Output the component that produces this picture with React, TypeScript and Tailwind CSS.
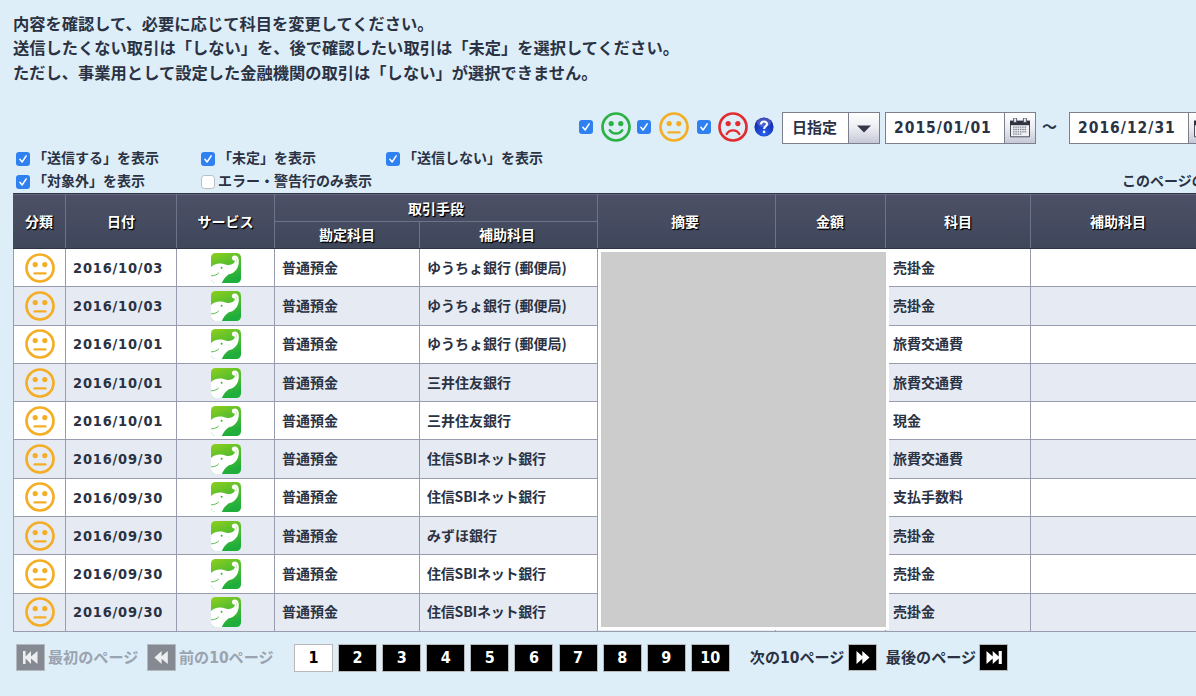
import React from "react";

type Mood = "happy" | "neutral" | "sad";

const moodColor: Record<Mood, string> = {
  happy: "#2cb242",
  neutral: "#f3ae26",
  sad: "#e02c30",
};

function Face({ mood }: { mood: Mood }) {
  const c = moodColor[mood];
  return (
    <svg width="30" height="30" viewBox="0 0 30 30" fill="none" className="block shrink-0">
      <circle cx="15" cy="15" r="13.5" stroke={c} strokeWidth="2.7" />
      <circle cx="10.2" cy="11.6" r="2.6" fill={c} />
      <circle cx="19.8" cy="11.6" r="2.6" fill={c} />
      {mood === "happy" && (
        <path d="M8.7 18.2C11.3 22.6 18.7 22.6 21.3 18.2" stroke={c} strokeWidth="2.4" strokeLinecap="round" />
      )}
      {mood === "neutral" && <path d="M9.6 20.4H20.4" stroke={c} strokeWidth="2.4" strokeLinecap="round" />}
      {mood === "sad" && (
        <path d="M8.7 22C11.3 17.2 18.7 17.2 21.3 22" stroke={c} strokeWidth="2.4" strokeLinecap="round" />
      )}
    </svg>
  );
}

function Check({ on = true }: { on?: boolean }) {
  return (
    <svg width="14" height="14" viewBox="0 0 14 14" fill="none" className="block shrink-0">
      {on ? (
        <>
          <rect width="14" height="14" rx="3" fill="#2f80f0" />
          <path d="M3.9 7.3L6.1 10L10.2 3.8" stroke="#fff" strokeWidth="1.5" strokeLinecap="round" strokeLinejoin="round" />
        </>
      ) : (
        <rect x=".5" y=".5" width="13" height="13" rx="2.8" fill="#fff" stroke="#b9bec3" />
      )}
    </svg>
  );
}

function Elephant() {
  return (
    <svg width="30" height="30" viewBox="0 0 30 30" className="block">
      <defs>
        <linearGradient id="leaf" x1="0" y1="0" x2="0.4" y2="1">
          <stop offset="0" stopColor="#8fcf1d" />
          <stop offset="1" stopColor="#1fae3c" />
        </linearGradient>
        <clipPath id="tile">
          <rect width="30" height="30" rx="4.5" />
        </clipPath>
      </defs>
      <g clipPath="url(#tile)">
        <rect width="30" height="30" fill="url(#leaf)" />
        <path
          d="M0 14C2.5 11.6 6 10.2 10 10.6C13 10.9 14.6 12.2 17.6 12C21.6 11.7 24 10 23.8 7.6C22.4 7.6 20.8 6.9 20.8 5C20.8 3.3 22.4 2.2 24.2 2.5C27 2.9 28 5.5 27.8 9C27.4 15.8 23.5 20.4 17.8 21.2C14.8 23.6 12.2 26.2 10.8 30H0Z"
          fill="#fff"
        />
        <path d="M24.6 4.9C25.6 6 25.8 7.6 25.4 9.6" stroke="#b4df85" strokeWidth=".6" fill="none" />
        <circle cx="10.6" cy="14.8" r="1" fill="#3fae35" />
        <path d="M0.5 22.8C3.6 22.8 6 21.7 7.6 20" stroke="#45b437" strokeWidth=".9" fill="none" strokeLinecap="round" />
      </g>
    </svg>
  );
}

function Calendar() {
  return (
    <svg width="20" height="20" viewBox="0 0 20 20" className="block">
      <path d="M.5 3.5h19v15.3H.5z" fill="#f1f2f5" stroke="#4a4f5c" />
      <path d="M0 2.6h20v4.6H0z" fill="#2f3340" />
      <path d="M3.6 0h3v4.4h-3zM13.4 0h3v4.4h-3z" fill="#e8eaf0" stroke="#3c4150" strokeWidth=".8" />
      <path d="M3 9.2h14M3 11.5h14M3 13.8h14M3 16.1h9" stroke="#7d8290" strokeWidth="1.3" strokeDasharray="1.5 .8" />
    </svg>
  );
}

const columns = "grid grid-cols-[52px_111px_98px_145px_178px_178px_110px_145px_175px]";

const head = "flex items-center justify-center border-l border-[#6c7489]";

const cell = "flex items-center border-l border-[#989cae] pl-[7px]";

const bank = "ゆうちょ銀行 (郵便局)";
const rows = [
  ["2016/10/03", bank, "売掛金"],
  ["2016/10/03", bank, "売掛金"],
  ["2016/10/01", bank, "旅費交通費"],
  ["2016/10/01", "三井住友銀行", "旅費交通費"],
  ["2016/10/01", "三井住友銀行", "現金"],
  ["2016/09/30", "住信SBIネット銀行", "旅費交通費"],
  ["2016/09/30", "住信SBIネット銀行", "支払手数料"],
  ["2016/09/30", "みずほ銀行", "売掛金"],
  ["2016/09/30", "住信SBIネット銀行", "売掛金"],
  ["2016/09/30", "住信SBIネット銀行", "売掛金"],
];

const fieldButton =
  "flex w-[31px] shrink-0 items-center justify-center border-l border-[#7c808c] bg-linear-to-b from-white via-[#ecedf2] to-[#c5c8d6]";

function DateField({ value }: { value: string }) {
  return (
    <div className="flex h-8 w-[151px] shrink-0 border border-[#7c808c] bg-white">
      <div className="flex flex-1 items-center pt-[2px] pl-[8px] font-['DejaVu_Sans_Condensed','DejaVu_Sans',sans-serif] text-[15.5px] tracking-[1px]">
        {value}
      </div>
      <div className={fieldButton}>
        <Calendar />
      </div>
    </div>
  );
}

function NavIcon({ kind, dim = false }: { kind: "first" | "prev" | "next" | "last"; dim?: boolean }) {
  const d = {
    first: "M6 7h2.6v5.4L14 7v5.4L20.5 7v13L14 14.6V20l-5.4-5.4V20H6z",
    prev: "M13.6 7v5.2L19.8 7v13l-6.2-5.2V20L6.4 13.5z",
    next: "M7.5 7v13l5.8-5.2V20l7.2-6.5L13.3 7v5.2z",
    last: "M6.5 7v13l6.2-5.4V20l6-5.4V20h3.1V7h-3.1v5.4L12.7 7v5.4z",
  }[kind];
  return (
    <span className={dim ? "block border border-[#b4b9c0] bg-[#858991]" : "block border border-[#b8b8b8] bg-black"}>
      <svg width="27" height="25" viewBox="0 1 27 25" className="block">
        <path d={d} fill={dim ? "#eceef0" : "#fff"} />
      </svg>
    </span>
  );
}

function Option({ label, on = true, wide = false }: { label: string; on?: boolean; wide?: boolean }) {
  return (
    <div className={`flex shrink-0 items-center ${wide ? "w-[921px]" : "w-[185px]"}`}>
      <Check on={on} />
      <span className="ml-[3px] pb-[3px]">{label}</span>
    </div>
  );
}

const Ten = () => (
  <span className="font-['DejaVu_Sans_Condensed','DejaVu_Sans',sans-serif] text-[15.5px] leading-none">10</span>
);

export default function App() {
  return (
    <div className="h-[696px] w-[1196px] overflow-hidden bg-[#deeef8] font-['Noto_Sans_CJK_JP',sans-serif] text-[14px] font-bold whitespace-nowrap text-[#2b3243]">
      <div className="h-[106px] pt-[11px] pl-[13px] text-[16.28px] leading-[24.4px]">
        <p>内容を確認して、必要に応じて科目を変更してください。</p>
        <p>送信したくない取引は「しない」を、後で確認したい取引は「未定」を選択してください。</p>
        <p>ただし、事業用として設定した金融機関の取引は「しない」が選択できません。</p>
      </div>

      <div className="flex h-[42px] items-center pl-[579px]">
        <Check />
        <div className="ml-2">
          <Face mood="happy" />
        </div>
        <div className="ml-[6px]">
          <Check />
        </div>
        <div className="ml-2">
          <Face mood="neutral" />
        </div>
        <div className="ml-2">
          <Check />
        </div>
        <div className="ml-[7px]">
          <Face mood="sad" />
        </div>
        <svg width="20" height="20" viewBox="0 0 20 20" className="ml-[6px] block shrink-0">
          <defs>
            <radialGradient id="orb" cx=".5" cy=".85" r=".8">
              <stop offset="0" stopColor="#2a62ee" />
              <stop offset="1" stopColor="#0e20a4" />
            </radialGradient>
          </defs>
          <circle cx="10" cy="10" r="9.6" fill="url(#orb)" />
          <ellipse cx="10" cy="5.5" rx="7" ry="4.5" fill="#fff" opacity=".22" />
          <path d="M6.9 7.4C7.1 3.4 13.2 3.7 13 7.2C12.9 9.3 10.1 9.3 10.1 12" fill="none" stroke="#fff" strokeWidth="2.1" />
          <circle cx="10.1" cy="14.9" r="1.35" fill="#fff" />
        </svg>
        <div className="mt-[2px] ml-[8px] flex h-8 w-[98px] shrink-0 border border-[#7c808c] bg-white">
          <div className="flex flex-1 items-center pb-[2px] pl-[9px] text-[15px]">日指定</div>
          <div className={fieldButton}>
            <svg width="14" height="8" viewBox="0 0 14 8" className="mt-[2px] block">
              <path d="M0 .5h14L7 7.5z" fill="#343848" />
            </svg>
          </div>
        </div>
        <div className="mt-[2px] ml-[5px]">
          <DateField value="2015/01/01" />
        </div>
        <span className="ml-[6px] w-[16px] pb-[2px] text-[15px]">～</span>
        <div className="mt-[2px] ml-[12px]">
          <DateField value="2016/12/31" />
        </div>
      </div>

      <div className="flex h-[45px] flex-col">
        <div className="flex h-[22px] items-center pl-4">
          <Option label="「送信する」を表示" />
          <Option label="「未定」を表示" />
          <Option label="「送信しない」を表示" />
        </div>
        <div className="flex h-[23px] items-center pt-px pl-4">
          <Option label="「対象外」を表示" />
          <Option label="エラー・警告行のみ表示" on={false} wide />
          <span className="pb-[3px]">このページの</span>
        </div>
      </div>

      <div className="relative ml-[13px] h-[439px] w-[1192px]">
        <div
          className={`${columns} h-[56px] border-t border-b border-[#2f3446] bg-linear-to-b from-[#4d5066] to-[#3f475b] text-white shadow-[inset_0_1px_0_#5f677b] [text-shadow:1px_1px_1px_#000,1px_1px_1px_#000]`}
        >
          <div className="flex items-center justify-center">分類</div>
          <div className={head}>日付</div>
          <div className={head}>サービス</div>
          <div className="col-span-2 grid grid-cols-[144px_178px] grid-rows-[27px_27px] border-l border-[#6c7489]">
            <div className="col-span-2 flex items-center justify-center pt-[1px]">取引手段</div>
            <div className="flex items-center justify-center border-t border-[#6c7489] pb-px">勘定科目</div>
            <div className="flex items-center justify-center border-t border-l border-[#6c7489] pr-[3px] pb-px">補助科目</div>
          </div>
          <div className={`${head} pr-[3px]`}>摘要</div>
          <div className={`${head} pr-[1px]`}>金額</div>
          <div className={head}>科目</div>
          <div className={head}>補助科目</div>
        </div>

        {rows.map(([date, account, subject], i) => (
          <div
            key={i}
            className={`${columns} h-[38.3px] border-b border-[#989cae] ${i % 2 ? "bg-[#e6ebf3]" : "bg-white"}`}
          >
            <div className="flex items-center justify-center border-l border-[#989cae]">
              <Face mood="neutral" />
            </div>
            <div className={`${cell} pt-[2px] font-['DejaVu_Sans_Condensed','DejaVu_Sans',sans-serif] text-[14.5px] tracking-[0.8px]`}>
              {date}
            </div>
            <div className="flex items-center justify-center border-l border-[#989cae]">
              <Elephant />
            </div>
            <div className={`${cell} pb-px`}>普通預金</div>
            <div className={`${cell} pb-px ${account.includes("SBI") ? "tracking-[-0.2px]" : ""}`}>{account}</div>
            <div className="border-l border-[#989cae]" />
            <div className="border-l border-[#989cae]" />
            <div className={`${cell} pb-px`}>{subject}</div>
            <div className="border-l border-[#989cae]" />
          </div>
        ))}

        <div className="absolute top-[56px] left-[585px] h-[381px] w-[291px] border-[3px] border-white bg-[#cccccc]" />
      </div>

      <div className="flex h-[51px] items-center pl-[16px] text-[15.1px]">
        <NavIcon kind="first" dim />
        <span className="ml-[3px] w-[99px] pb-[2px] text-[#9aa3b0]">最初のページ</span>
        <NavIcon kind="prev" dim />
        <span className="ml-[3px] w-[115px] pb-[2px] text-[#9aa3b0]">
          前の
          <Ten />
          ページ
        </span>
        <div className="flex gap-[5.1px]">
          {Array.from({ length: 10 }, (_, i) => (
            <span
              key={i}
              className={`flex h-[28px] w-[39px] items-center justify-center border border-[#b8b8b8] pt-px font-['DejaVu_Sans_Condensed','DejaVu_Sans',sans-serif] text-[16px] ${
                i === 0 ? "bg-white text-black" : "bg-black text-white"
              }`}
            >
              {i + 1}
            </span>
          ))}
        </div>
        <span className="ml-[20px] w-[98px] pb-[2px]">
          次の
          <Ten />
          ページ
        </span>
        <NavIcon kind="next" />
        <span className="ml-[9px] w-[93px] pb-[2px]">最後のページ</span>
        <NavIcon kind="last" />
      </div>
    </div>
  );
}
